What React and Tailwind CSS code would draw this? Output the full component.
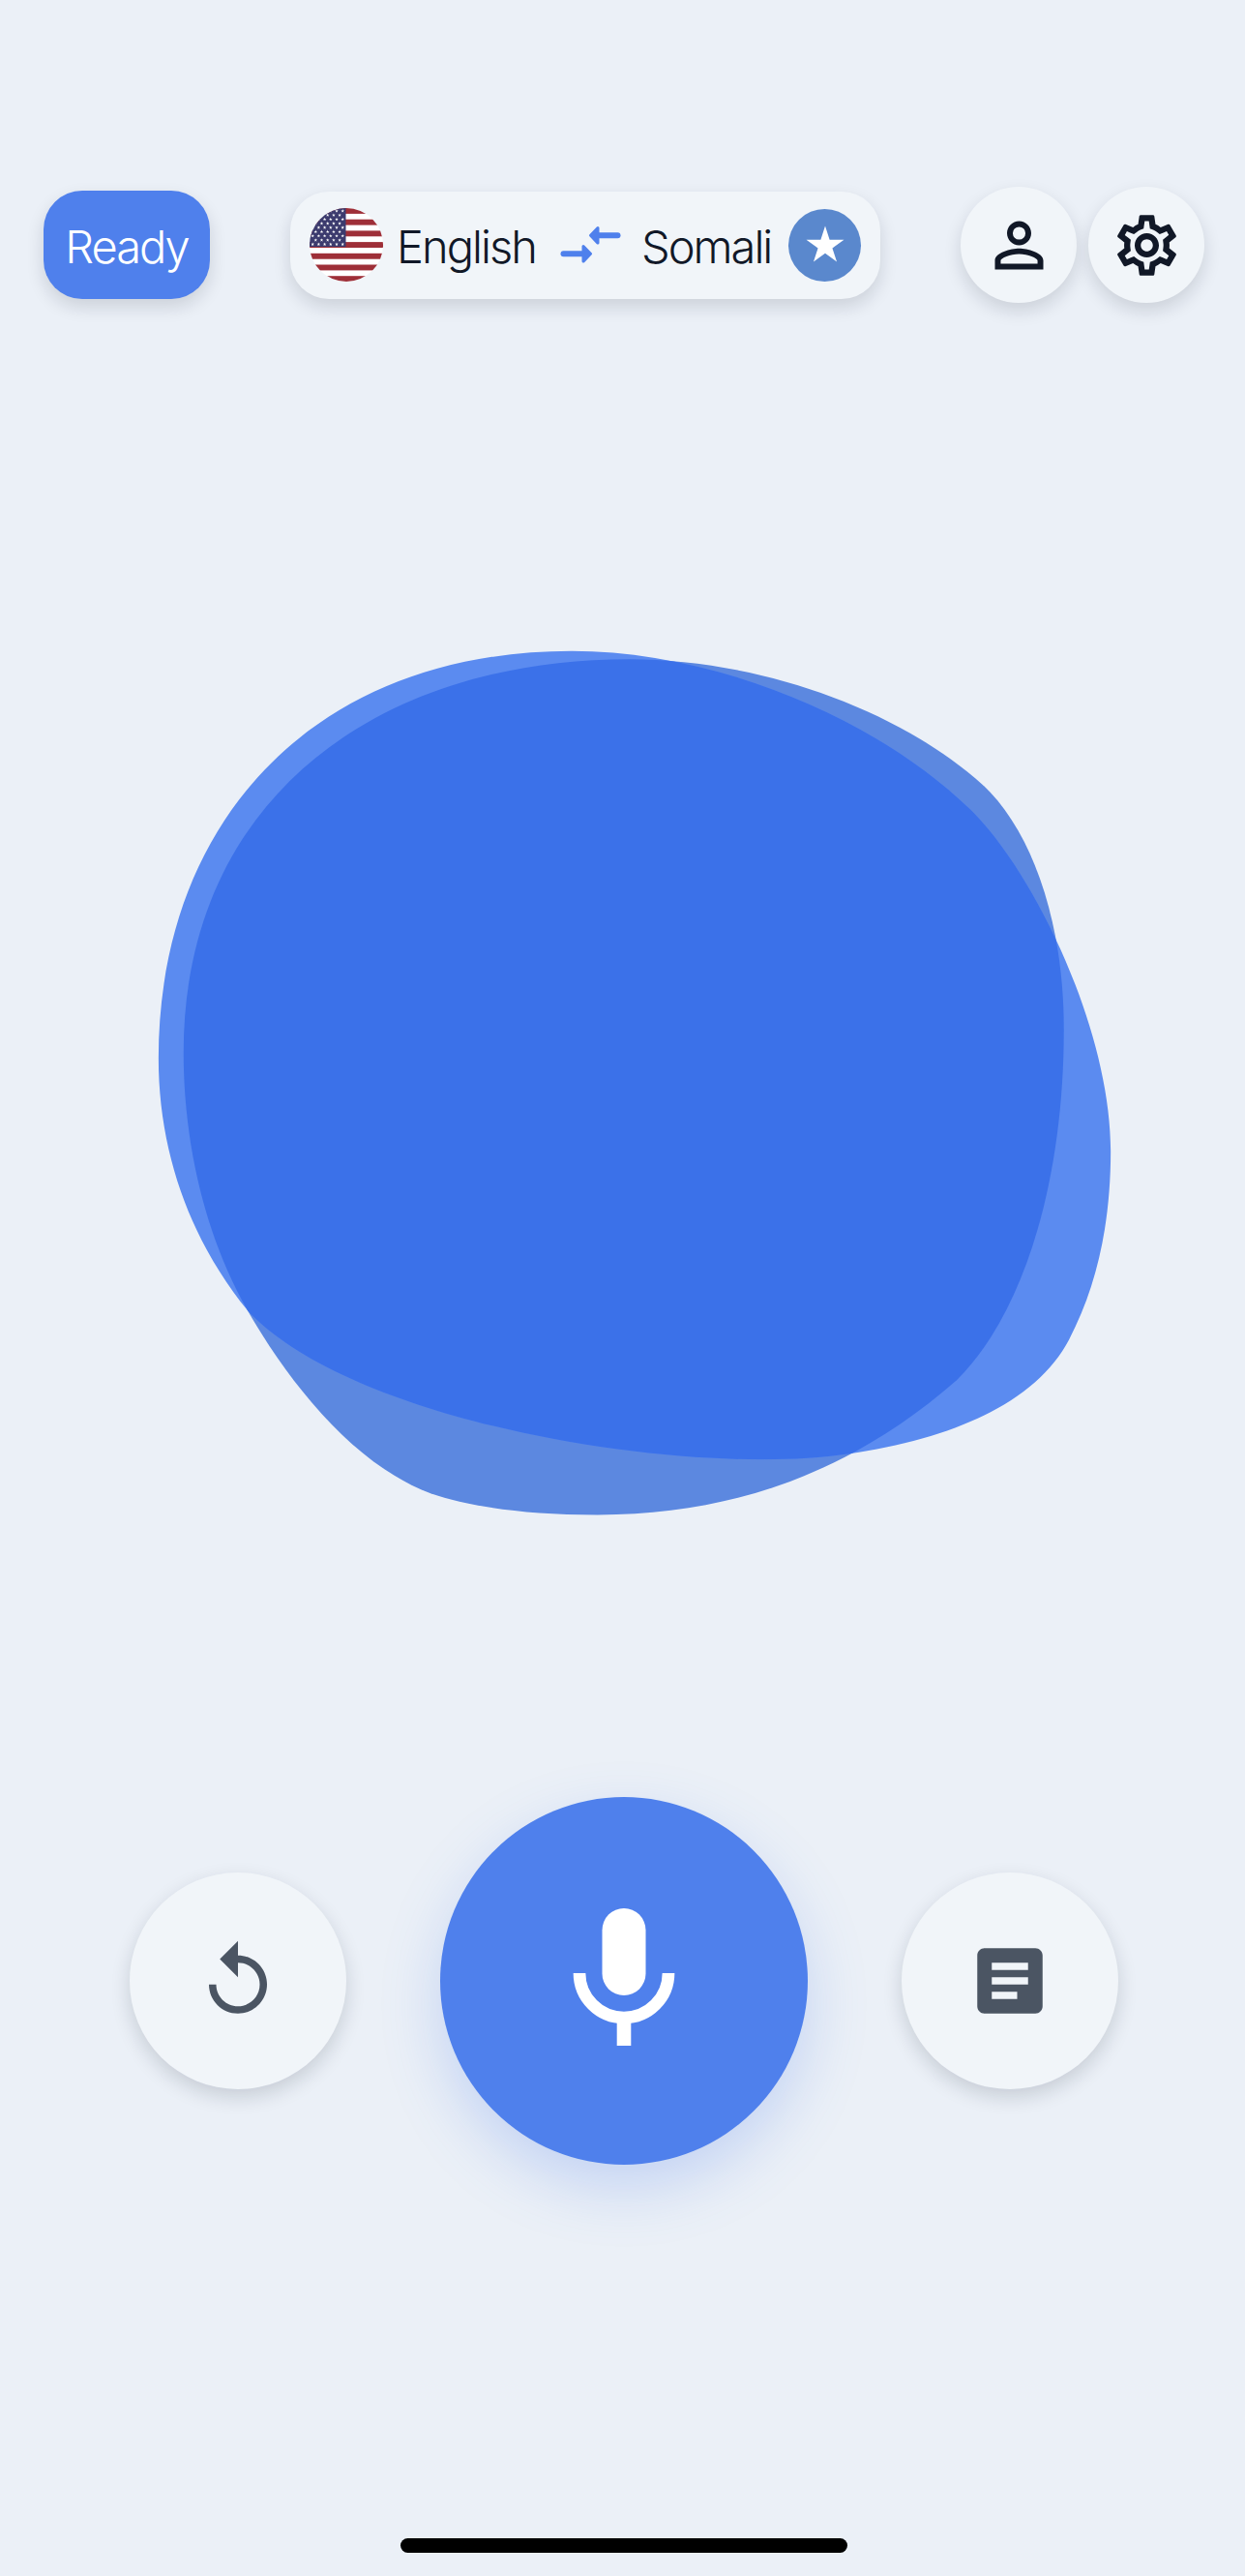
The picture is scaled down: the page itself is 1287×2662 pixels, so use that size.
import { MdReplay, MdArticle, MdPersonOutline, MdOutlineSettings } from "react-icons/md";

const blobA =
  "M680 38C900 38 1150 150 1300 310C1400 417 1520 690 1520 900C1520 1020 1500 1130 1455 1225C1405 1330 1280 1395 1110 1422C860 1463 340 1370 175 1175C90 1060 36 910 36 740C36 330 280 38 680 38Z";

const blobB =
  "M770 52C960 52 1180 130 1320 268C1395 345 1447 500 1447 690C1447 950 1385 1180 1280 1295C1130 1440 950 1527 720 1527C600 1527 520 1512 460 1490C340 1440 240 1300 175 1175C110 1050 75 890 75 730C75 300 370 52 770 52Z";

const starPoints = (cx, cy, r) => {
  const out = [];
  for (let i = 0; i < 10; i++) {
    const rad = i % 2 === 0 ? r : r * 0.382;
    const a = (Math.PI / 5) * i - Math.PI / 2;
    out.push(`${cx + rad * Math.cos(a)},${cy + rad * Math.sin(a)}`);
  }
  return out.join(" ");
};

const UsFlag = () => {
  const stars = [];
  for (let row = 0; row < 9; row++) {
    const count = row % 2 === 0 ? 6 : 5;
    for (let col = 0; col < count; col++) {
      const x = (row % 2 === 0 ? 3.2 : 6.3) + col * 6.2;
      stars.push(<polygon key={`${row}-${col}`} points={starPoints(x, 3 + row * 4.3, 1.9)} fill="#ffffff" />);
    }
  }
  return (
    <svg width="76" height="76" viewBox="0 0 76 76" className="shrink-0">
      <defs>
        <clipPath id="flag-circle">
          <circle cx="38" cy="38" r="38" />
        </clipPath>
      </defs>
      <g clipPath="url(#flag-circle)">
        <rect width="76" height="76" fill="#ffffff" />
        {[0, 1, 2, 3, 4, 5, 6].map((i) => (
          <rect key={i} x="0" y={i * 11.7} width="76" height="5.9" fill="#9e2f38" />
        ))}
        <rect width="37.5" height="40" fill="#3c3b6e" />
        {stars}
      </g>
    </svg>
  );
};

const SwapArrows = () => (
  <svg width="64" height="42" viewBox="0 0 64 42" className="shrink-0" fill="#4f80ec" stroke="#4f80ec" strokeLinejoin="round" strokeLinecap="round">
    <path d="M38 11.3H59.5" strokeWidth="6" />
    <path d="M31.5 11.3L39 3.5V19.1Z" strokeWidth="3" />
    <path d="M3.5 30.3H26" strokeWidth="6" />
    <path d="M31.5 30.3L24 22.5V38.1Z" strokeWidth="3" />
  </svg>
);

const MicIcon = () => (
  <svg width="106" height="142" viewBox="0 0 106 142" className="mb-2" fill="#ffffff">
    <rect x="30.5" y="0" width="45" height="90" rx="22.5" />
    <path d="M7 67a46 46 0 0 0 92 0" fill="none" stroke="#ffffff" strokeWidth="12.7" />
    <rect x="45.7" y="110" width="14.6" height="32" />
  </svg>
);

const App = () => {
  return (
    <div className="w-[1287px] h-[2662px] pt-[193px] bg-[#ebf0f7] overflow-hidden font-['Inter',sans-serif]">

      <div className="flex items-center justify-between h-[120px] pl-[45px] pr-[42px]">
        <div className="w-[172px] h-[112px] rounded-[40px] bg-[#4f80ec] text-white text-[47px] tracking-[-2px] font-light flex items-center justify-center shadow-[0_8px_18px_rgba(15,23,42,0.14)]">
          <span className="mt-1">Ready</span>
        </div>

        <div className="w-[610px] h-[111px] rounded-[40px] bg-[#f1f5f9] flex items-center pl-5 text-[47px] tracking-[-2px] font-light text-[#111827] shadow-[0_8px_18px_rgba(15,23,42,0.14)]">
          <UsFlag />
          <span className="ml-[14px] mt-1 w-[146px]">English</span>
          <div className="ml-[23px]">
            <SwapArrows />
          </div>
          <span className="ml-5 mt-1 w-[136px]">Somali</span>
          <div className="ml-4 w-[75px] h-[75px] rounded-full bg-[#5a88cd] flex items-center justify-center">
            <svg width="42" height="40" viewBox="0 0 42 40">
              <polygon points={starPoints(21, 21, 20.5)} fill="#ffffff" />
            </svg>
          </div>
        </div>

        <div className="flex gap-3">
          <div className="w-[120px] h-[120px] rounded-full bg-[#f1f5f9] flex items-center justify-center shadow-[0_8px_18px_rgba(15,23,42,0.14)]">
            <MdPersonOutline size={75} color="#111827" />
          </div>
          <div className="w-[120px] h-[120px] rounded-full bg-[#f1f5f9] flex items-center justify-center shadow-[0_8px_18px_rgba(15,23,42,0.14)]">
            <MdOutlineSettings size={75} color="#111827" />
          </div>
        </div>
      </div>

      <svg width="1040" height="940" viewBox="0 0 1568 1568" preserveAspectRatio="none" className="block ml-[140px] mt-[337px]">
        <defs>
          <clipPath id="blob-a">
            <path d={blobA} />
          </clipPath>
        </defs>
        <path d={blobB} fill="#5c88e0" />
        <path d={blobA} fill="#5b8bf0" />
        <path d={blobB} fill="#3b71e9" clipPath="url(#blob-a)" />
      </svg>

      <div className="flex items-center gap-[97px] h-[380px] pl-[134px] mt-[267px]">
        <div className="w-56 h-56 rounded-full bg-[#f1f5f9] flex items-center justify-center shadow-[0_8px_20px_rgba(15,23,42,0.16)]">
          <MdReplay size={90} color="#4b5563" />
        </div>
        <div className="w-[380px] h-[380px] rounded-full bg-[#4f80ec] flex items-center justify-center shadow-[0_24px_60px_rgba(79,128,236,0.25)]">
          <MicIcon />
        </div>
        <div className="w-56 h-56 rounded-full bg-[#f1f5f9] flex items-center justify-center shadow-[0_8px_20px_rgba(15,23,42,0.16)]">
          <MdArticle size={90} color="#4b5563" />
        </div>
      </div>

      <div className="w-[462px] h-[15px] rounded-full bg-black ml-[414px] mt-[386px]" />

    </div>
  );
};

export default App;
